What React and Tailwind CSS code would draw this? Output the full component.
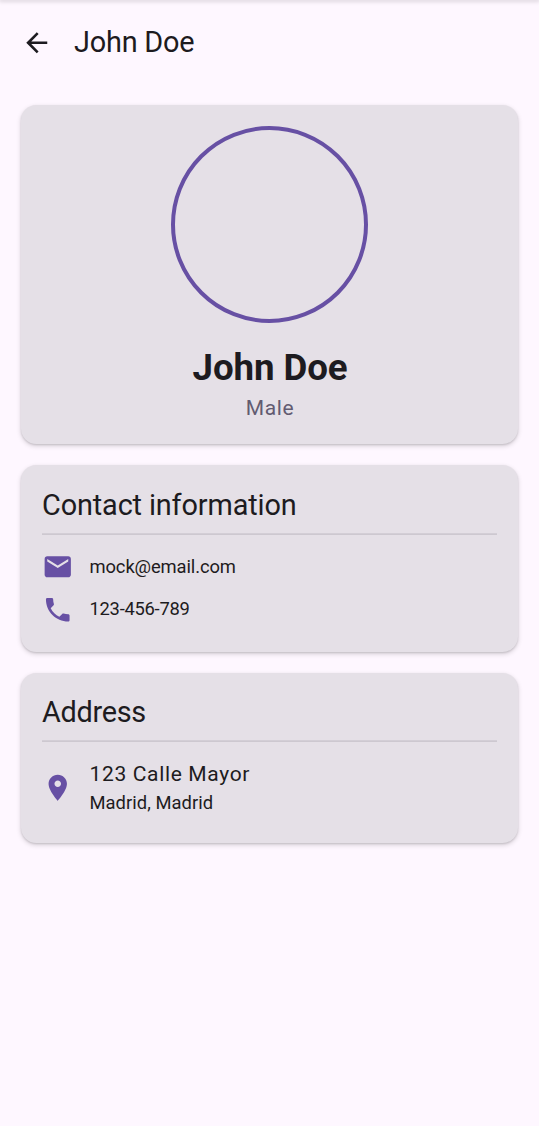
import React from "react";

function Icon({ d, className }) {
  return (
    <svg viewBox="0 0 24 24" fill="currentColor" className={className} aria-hidden="true">
      <path d={d} />
    </svg>
  );
}

const BACK = "M20 11H7.83l5.59-5.59L12 4l-8 8 8 8 1.41-1.41L7.83 13H20v-2z";
const MAIL = "M20 4H4c-1.1 0-1.99.9-1.99 2L2 18c0 1.1.9 2 2 2h16c1.1 0 2-.9 2-2V6c0-1.1-.9-2-2-2zm0 4l-8 5-8-5V6l8 5 8-5v2z";
const PHONE = "M6.62 10.79c1.44 2.83 3.76 5.14 6.59 6.59l2.2-2.2c.27-.27.67-.36 1.02-.24 1.12.37 2.33.57 3.57.57.55 0 1 .45 1 1V20c0 .55-.45 1-1 1-9.39 0-17-7.61-17-17 0-.55.45-1 1-1h3.5c.55 0 1 .45 1 1 0 1.25.2 2.45.57 3.57.11.35.03.74-.25 1.02l-2.2 2.2z";
const PIN = "M12 2C8.13 2 5 5.13 5 9c0 5.25 7 13 7 13s7-7.75 7-13c0-3.87-3.13-7-7-7zm0 9.5c-1.38 0-2.5-1.12-2.5-2.5s1.12-2.5 2.5-2.5 2.5 1.12 2.5 2.5-1.12 2.5-2.5 2.5z";

function Card({ className, children }) {
  return (
    <section
      className={
        "rounded-[15.5px] bg-[#e5e0e7] px-[21px] shadow-[0_1px_2px_rgba(0,0,0,0.12),0_2px_5px_rgba(0,0,0,0.16)] " +
        className
      }
    >
      {children}
    </section>
  );
}

function SectionTitle({ className, children }) {
  return (
    <>
      <h2 className={"text-[28.85px] leading-[37px] " + className}>{children}</h2>
      <div className="mt-[9px] h-px bg-[#d3ced6]" />
      <div className="h-px bg-[#cdc8d0]" />
    </>
  );
}

export default function App() {
  return (
    <div className="min-h-[1126px] bg-[#fef7ff] font-['Roboto',sans-serif] text-[#1d1b20]">
      <div className="h-0 shadow-[0_0_4px_1px_rgba(0,0,0,0.25)]" />
      <header className="flex h-[84px] items-center pl-[21px]">
        <Icon d={BACK} className="mt-px size-[31.5px]" />
        <h1 className="ml-[21.5px] pt-px text-[28.85px] leading-[37px] tracking-[-0.2px]">John Doe</h1>
      </header>
      <main className="flex flex-col gap-[21px] px-[21px] pt-[21px]">
        <Card className="flex h-[339px] flex-col items-center pt-[21px]">
          <div className="size-[197px] rounded-full border-4 border-[#6750a4]" />
          <p className="mt-[21px] pl-px text-[36.7px] leading-[47px] font-bold tracking-[-0.1px]">John Doe</p>
          <p className="pt-px pl-px text-[21px] leading-[32px] tracking-[0.66px] text-[#625b71]">Male</p>
        </Card>
        <Card className="h-[187px] pt-[22px]">
          <SectionTitle className="tracking-[-0.13px]">Contact information</SectionTitle>
          <div className="flex flex-col gap-[11px] pt-[16px]">
            <div className="flex items-center gap-4">
              <Icon d={MAIL} className="size-[31.5px] text-[#6750a4]" />
              <span className="text-[18.36px] leading-[26px] tracking-[-0.1px]">mock@email.com</span>
            </div>
            <div className="flex items-center gap-4">
              <Icon d={PHONE} className="size-[31.5px] text-[#6750a4]" />
              <span className="text-[18.36px] leading-[26px] tracking-[-0.27px]">123-456-789</span>
            </div>
          </div>
        </Card>
        <Card className="h-[170px] pt-[21px]">
          <SectionTitle className="tracking-[-0.3px]">Address</SectionTitle>
          <div className="flex items-center gap-4 pt-[17px]">
            <Icon d={PIN} className="size-[31.5px] text-[#6750a4]" />
            <div>
              <p className="text-[21px] leading-[31px] tracking-[0.66px]">123 Calle Mayor</p>
              <p className="text-[18.36px] leading-[26px] tracking-[0.04px]">Madrid, Madrid</p>
            </div>
          </div>
        </Card>
      </main>
    </div>
  );
}
